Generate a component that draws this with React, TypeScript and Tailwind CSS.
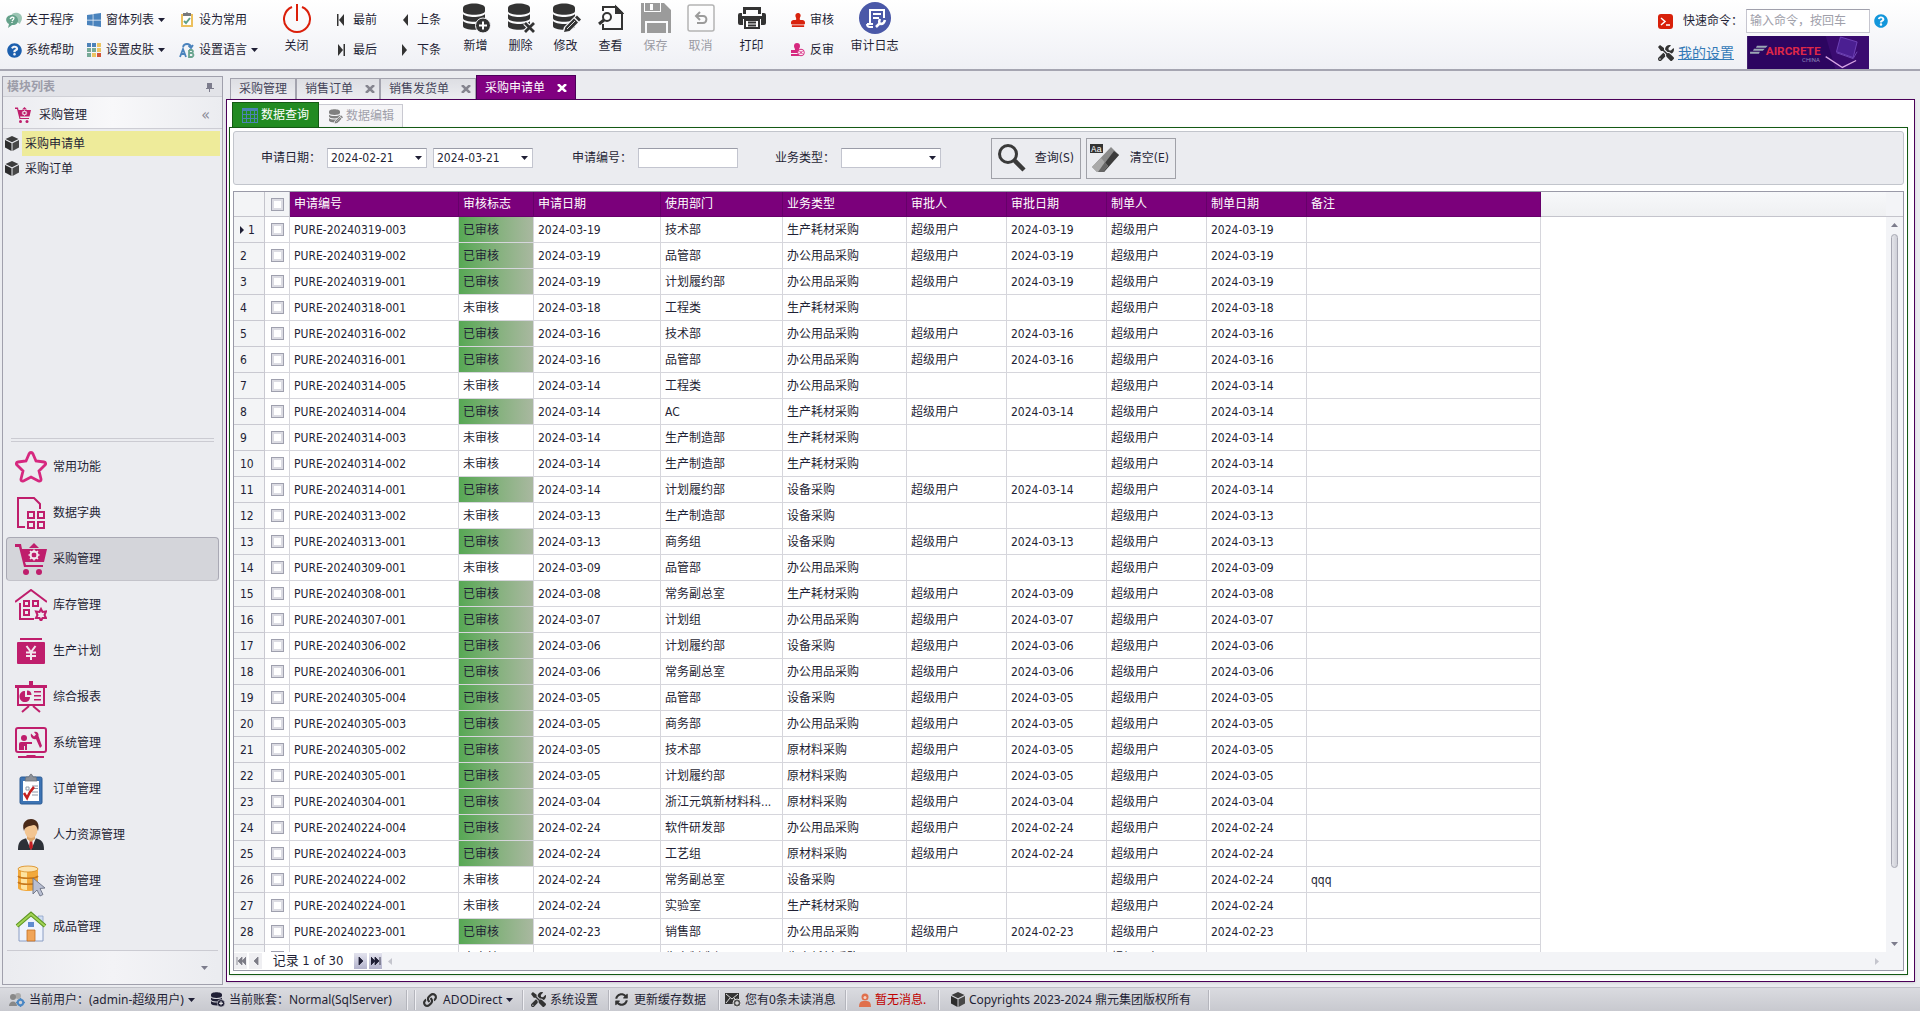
import type { ReactNode } from 'react'
import { FaDatabase, FaLink, FaQuestionCircle, FaStamp, FaSyncAlt, FaTools, FaWindows } from 'react-icons/fa'

const PINK = '#bf1e6c'

const RECORDS: string[][] = [
  ['20240319-003', '1', '2024-03-19', '技术部', '生产耗材采购', '2024-03-19'],
  ['20240319-002', '1', '2024-03-19', '品管部', '办公用品采购', '2024-03-19'],
  ['20240319-001', '1', '2024-03-19', '计划履约部', '办公用品采购', '2024-03-19'],
  ['20240318-001', '0', '2024-03-18', '工程类', '生产耗材采购', ''],
  ['20240316-002', '1', '2024-03-16', '技术部', '办公用品采购', '2024-03-16'],
  ['20240316-001', '1', '2024-03-16', '品管部', '办公用品采购', '2024-03-16'],
  ['20240314-005', '0', '2024-03-14', '工程类', '办公用品采购', ''],
  ['20240314-004', '1', '2024-03-14', 'AC', '生产耗材采购', '2024-03-14'],
  ['20240314-003', '0', '2024-03-14', '生产制造部', '生产耗材采购', ''],
  ['20240314-002', '0', '2024-03-14', '生产制造部', '生产耗材采购', ''],
  ['20240314-001', '1', '2024-03-14', '计划履约部', '设备采购', '2024-03-14'],
  ['20240313-002', '0', '2024-03-13', '生产制造部', '设备采购', ''],
  ['20240313-001', '1', '2024-03-13', '商务组', '设备采购', '2024-03-13'],
  ['20240309-001', '0', '2024-03-09', '品管部', '办公用品采购', ''],
  ['20240308-001', '1', '2024-03-08', '常务副总室', '生产耗材采购', '2024-03-09'],
  ['20240307-001', '1', '2024-03-07', '计划组', '办公用品采购', '2024-03-07'],
  ['20240306-002', '1', '2024-03-06', '计划履约部', '设备采购', '2024-03-06'],
  ['20240306-001', '1', '2024-03-06', '常务副总室', '办公用品采购', '2024-03-06'],
  ['20240305-004', '1', '2024-03-05', '品管部', '设备采购', '2024-03-05'],
  ['20240305-003', '1', '2024-03-05', '商务部', '办公用品采购', '2024-03-05'],
  ['20240305-002', '1', '2024-03-05', '技术部', '原材料采购', '2024-03-05'],
  ['20240305-001', '1', '2024-03-05', '计划履约部', '原材料采购', '2024-03-05'],
  ['20240304-001', '1', '2024-03-04', '浙江元筑新材料科...', '原材料采购', '2024-03-04'],
  ['20240224-004', '1', '2024-02-24', '软件研发部', '办公用品采购', '2024-02-24'],
  ['20240224-003', '1', '2024-02-24', '工艺组', '原材料采购', '2024-02-24'],
  ['20240224-002', '0', '2024-02-24', '常务副总室', '设备采购', '', 'qqq'],
  ['20240224-001', '0', '2024-02-24', '实验室', '生产耗材采购', ''],
  ['20240223-001', '1', '2024-02-23', '销售部', '办公用品采购', '2024-02-23'],
  ['20240222-001', '0', '2024-02-22', '生产制造部', '生产耗材采购', ''],
]

const HEADERS = ['申请编号', '审核标志', '申请日期', '使用部门', '业务类型', '审批人', '审批日期', '制单人', '制单日期', '备注']

function Caret({ className = 'text-[#1f1f35]' }: { className?: string }) {
  return (
    <svg className={`shrink-0 ${className}`} width="7" height="4" viewBox="0 0 7 4" fill="currentColor">
      <path d="M0 0h7L3.5 4z" />
    </svg>
  )
}

function Db({ size, badge }: { size: number; badge?: 'add' | 'del' | 'edit' }) {
  return (
    <svg width={size} height={size} viewBox="0 0 30 30">
      <g fill="currentColor">
        <path d="M2 5c0-6 22-6 22 0v3c0 5-22 5-22 0z" />
        <path d="M2 11c3 4 19 4 22 0v4c0 5-22 5-22 0z" />
        <path d="M2 18c3 4 19 4 22 0v5c0 5-22 5-22 0z" />
      </g>
      {badge === 'add' && (
        <g>
          <circle cx="22" cy="22.500" r="7.500" fill="currentColor" stroke="#f7f7fa" strokeWidth="1" />
          <path d="M22 18.500v8M18 22.500h8" stroke="#fff" strokeWidth="2" />
        </g>
      )}
      {badge === 'del' && (
        <g fill="none">
          <path d="M19 20l9 9M28 20l-9 9" stroke="#f7f7fa" strokeWidth="5" />
          <path d="M19 20l9 9M28 20l-9 9" stroke="currentColor" strokeWidth="2.800" />
        </g>
      )}
      {badge === 'edit' && (
        <g>
          <path d="M11 31l2-7L25 12l6 5-13 12z" fill="#f7f7fa" />
          <path d="M13 29l1.500-5L23 15.500l4 4-8.500 8.500zM24 14.500l2-2 4 4-2 2z" fill="currentColor" />
          <path d="M16 26l8-8" stroke="#ddd" strokeWidth="1" />
        </g>
      )}
    </svg>
  )
}

const Cube = () => (
  <svg className="shrink-0" width="14" height="15" viewBox="0 0 14 15">
    <path d="M7 0l6.500 3L7 6.200.5 3z" fill="#3c3c3c" />
    <path d="M0 4l6.500 3.200V15L0 11.500z" fill="#2d2d2d" />
    <path d="M14 4L7.500 7.200V15l6.500-3.500z" fill="#484848" />
  </svg>
)

const Cart = ({ size }: { size: number }) => (
  <svg width={size} height={size} viewBox="0 0 32 32" fill={PINK}>
    <path d="M0 1h6l1 5h25l-3 13H10l1 3h17v2H9L4 4H0z" />
    <path d="M14 5l5-5 5 5z" />
    <circle cx="11" cy="29" r="3" />
    <circle cx="24" cy="29" r="3" />
    <circle cx="19" cy="12" r="3.500" fill="none" stroke="#f0e8ee" strokeWidth="2" />
    <path d="M19 6.500v3M19 14.500v3M13.500 12h3M21.500 12h3M15 8l2 2M21 14l2 2M23 8l-2 2M17 14l-2 2" stroke="#f0e8ee" strokeWidth="1.500" />
  </svg>
)

const NAV: { label: string; icon: ReactNode; active?: boolean }[] = [
  {
    label: '常用功能',
    icon: <path d="M16 1.500c1 0 1.500.5 2 1.500l3 7 8 1c2 .3 2 2 1 3l-6 6 2 8c.3 2-1 2.500-2.500 2L16 26l-7.500 4C7 30.500 5.700 30 6 28l2-8-6-6c-1-1-1-2.700 1-3l8-1 3-7c.5-1 1-1.500 2-1.500z" fill="none" stroke="#d6287f" strokeWidth="2.800" />,
  },
  {
    label: '数据字典',
    icon: (
      <g fill="none" stroke={PINK} strokeWidth="2">
        <path d="M10 30H3V1h16l6 6v5" />
        <path d="M13 15h6v6h-6zM23 15h6v6h-6zM13 25h6v6h-6zM23 25h6v6h-6z" />
      </g>
    ),
  },
  { label: '采购管理', icon: <Cart size={32} />, active: true },
  {
    label: '库存管理',
    icon: (
      <g fill="none" stroke={PINK} strokeWidth="2">
        <path d="M0 13L16 1l16 12M5 14v16h14" />
        <path d="M9 12h5v5H9zM18 12h5v5h-5zM9 21h5v5H9z" />
        <path d="M26 20l1.500 3 3.500-.5-1.500 3.500 1.500 3-3.500 0-1.500 3-1.500-3-3.500 0 1.500-3-1.500-3.500 3.500.5z" />
      </g>
    ),
  },
  {
    label: '生产计划',
    icon: (
      <g fill={PINK}>
        <path d="M5 3h22v2H5zM2 8q0-1 1-1h26q1 0 1 1v20q0 1-1 1H3q-1 0-1-1z" />
        <path d="M11.500 11l4.500 6 4.500-6M11 17.500h10M11 21h10M16 17v8" fill="none" stroke="#f3e6ee" strokeWidth="2" />
      </g>
    ),
  },
  {
    label: '综合报表',
    icon: (
      <g fill={PINK}>
        <path d="M14 0h4v4h14v3H0V4h14z" />
        <path d="M3 7v17h26V7" fill="none" stroke={PINK} strokeWidth="2" />
        <path d="M10 10v6h5c0 3-2 5-5 5s-5.500-2-5.500-5.500S7 10 10 10zM12 9.500c3 0 4.500 2 4.500 4.500H12zM19 10h7v1.500h-7zM19 14h7v1.500h-7zM19 18h7v1.500h-7z" />
        <path d="M14 25l-7 6M18 25l7 6" stroke={PINK} strokeWidth="2" />
      </g>
    ),
  },
  {
    label: '系统管理',
    icon: (
      <g fill={PINK}>
        <rect x="1" y="1" width="30" height="24" rx="2" fill="none" stroke={PINK} strokeWidth="2" />
        <path d="M12 28h8l1 1h8v2H3v-2h8z" />
        <circle cx="9" cy="11" r="3" />
        <path d="M4 23v-6q0-2 2-2h11v2h-5v6h-2v-4H9v4zM16 6.500l3 3 2-2-2-2.500c3-1 5 1 4.500 4L27 19l-2 2-4-9c-3 1-6-2-5-5.500z" />
      </g>
    ),
  },
  {
    label: '订单管理',
    icon: (
      <g>
        <rect x="5" y="4" width="22" height="27" rx="1.500" fill="#3d74b4" stroke="#2b5a93" />
        <path d="M8 8h16v20H8z" fill="#fff" />
        <path d="M10 8l1-4h3q2-6 4 0h3l1 4z" fill="#8d9198" stroke="#6f737a" strokeWidth=".8" />
        <path d="M11 14h3v3h-3zM17 13h6M17 15.500h6M17 19h6M17 22h6" fill="none" stroke="#8c98a6" />
        <path d="M9 20l3 5c2-5 4-8 7-11" fill="none" stroke="#c5201f" strokeWidth="2.500" />
      </g>
    ),
  },
  {
    label: '人力资源管理',
    icon: (
      <g>
        <path d="M3 31c0-8 2-10 9-12h8c7 2 9 4 9 12z" fill="#2d3138" />
        <path d="M11 19l5 12 5-12z" fill="#f4f4f4" />
        <path d="M15 20h2l1 8-2 3-2-3z" fill="#c11d22" />
        <path d="M12 15h8v5l-4 3-4-3z" fill="#dfa66b" />
        <ellipse cx="16" cy="11" rx="6.500" ry="8" fill="#f3c591" />
        <path d="M9 12C6 3 12 0 16 0c6 0 9 5 7 12-1-4-2-6-4-6-4 1-9 1-10 6z" fill="#4a2a18" />
      </g>
    ),
  },
  {
    label: '查询管理',
    icon: (
      <g>
        <path d="M3 4c0-4 20-4 20 0v19c0 4-20 4-20 0z" fill="#f2a93c" />
        <path d="M6 5h6v20c-3 0-6-1-6-2z" fill="#fde3a0" />
        <ellipse cx="13" cy="4" rx="10" ry="3" fill="#fbe3b0" stroke="#d98e25" strokeWidth=".8" />
        <path d="M3 11c2 3 18 3 20 0M3 17c2 3 18 3 20 0" fill="none" stroke="#c7771a" strokeWidth="1.500" />
        <path d="M18 13v16l4-4 3 6 3-1.500-3-6 5-.5z" fill="#b9bfd2" stroke="#6c7384" strokeWidth=".9" />
      </g>
    ),
  },
  {
    label: '成品管理',
    icon: (
      <g>
        <path d="M23 5h5v10h-5z" fill="#cfdcf2" stroke="#8ea3c8" strokeWidth=".8" />
        <path d="M4 14L16 4l12 10v16H4z" fill="#eef3fd" stroke="#7f95bd" strokeWidth=".9" />
        <path d="M2 15L16 3l14 12" fill="none" stroke="#5c9422" strokeWidth="4" />
        <path d="M2 15L16 3l14 12" fill="none" stroke="#a2d355" strokeWidth="2" />
        <path d="M13 11h6v5h-6z" fill="#5f8bd0" />
        <path d="M12 19h8v11h-8z" fill="#f0a55a" stroke="#c26f23" strokeWidth=".8" />
      </g>
    ),
  },
]

function SmallItem({ icon, label, caret }: { icon: ReactNode; label: string; caret?: boolean }) {
  return (
    <button type="button" className="flex h-[30px] items-center gap-1 whitespace-nowrap">
      <span className="flex w-4 shrink-0 justify-center">{icon}</span>
      {label}
      {caret && <Caret />}
    </button>
  )
}

function BigItem({ icon, label, disabled }: { icon: ReactNode; label: string; disabled?: boolean }) {
  return (
    <button type="button" disabled={disabled} className={`flex w-[45px] flex-col items-center whitespace-nowrap ${disabled ? 'text-[#9b9ba3]' : ''}`}>
      <span className={`flex h-8 items-center ${disabled ? 'text-[#9b9b9b]' : 'text-[#333]'}`}>{icon}</span>
      <span className="mt-1 leading-4">{label}</span>
    </button>
  )
}

function Arrow({ dir, bar }: { dir: 'left' | 'right'; bar?: boolean }) {
  return (
    <svg width="8" height="12" viewBox="0 0 8 12" fill="#333" className={dir === 'right' ? 'rotate-180' : ''}>
      {bar && <path d="M0 0h1.500v12H0z" />}
      <path d="M7 0v12L2 6z" />
    </svg>
  )
}

function Ribbon() {
  return (
    <header className="flex h-[71px] shrink-0 border-b-2 border-[#a5a5b1] bg-linear-to-b from-white to-[#eff0f5]">
      <div className="ml-1.5 flex pt-[5px]">
        <div className="mr-3">
          <SmallItem
            label="关于程序"
            icon={
              <svg width="16" height="16" viewBox="0 0 16 16">
                <path d="M5 4c1-5 11-4 11 2 0 3-2 4-2 6l-3-2z" fill="#9cc5b4" />
                <path d="M6 3c8 0 8 11 0 10l-4 3 1-4C-2 9 0 3 6 3z" fill="#64a18a" />
                <path d="M4 7q2-3 4-1 0 1-2 3M6 10v1" fill="none" stroke="#fff" strokeWidth="1.300" />
              </svg>
            }
          />
          <SmallItem label="系统帮助" icon={<FaQuestionCircle size={15} color="#1c5fae" />} />
        </div>
        <div className="mr-[14px]">
          <SmallItem label="窗体列表" icon={<FaWindows size={16} color="#4a83bd" />} caret />
          <SmallItem
            label="设置皮肤"
            caret
            icon={
              <svg width="15" height="15" viewBox="0 0 15 15">
                <path d="M0 0h4v4H0zM5 0h4v4H5z" fill="#4d82b8" />
                <path d="M10 0h4v4h-4zM10 5h4v4h-4z" fill="#ecc462" />
                <path d="M0 5h4v4H0zM5 5h4v4H5zM0 10h4v4H0z" fill="#77aa98" />
                <path d="M5 10h4v4H5z" fill="#ecc462" />
                <path d="M10 10h4v4h-4z" fill="#d2553a" />
              </svg>
            }
          />
        </div>
        <div>
          <SmallItem
            label="设为常用"
            icon={
              <svg width="14" height="16" viewBox="0 0 14 16">
                <path d="M2 3h10v11H2z" fill="#fff" stroke="#ecc05e" strokeWidth="2" />
                <path d="M3 4V1h3q1-2 2 0h3v3z" fill="#76787c" />
                <path d="M4 9l2 2 4-5" fill="none" stroke="#5f9f88" strokeWidth="2" />
              </svg>
            }
          />
          <SmallItem
            label="设置语言"
            caret
            icon={
              <svg width="16" height="15" viewBox="0 0 16 15" fill="none" strokeWidth="1.800">
                <path d="M1 14L4 6l3 8M2 11h4M4 4C5 0 11 0 12 4M9.500 2.500L12 5l2-3" stroke="#4a83bd" />
                <path d="M10 7h3q2 1 0 3h-3V7v7h3q3-2 0-4" stroke="#6aa58f" />
              </svg>
            }
          />
        </div>
      </div>
      <div className="ml-4 pt-[2px]">
        <BigItem
          label="关闭"
          icon={
            <svg width="30" height="30" viewBox="0 0 30 30" fill="none" stroke="#db1f0a" strokeWidth="2">
              <path d="M10 4a13 13 0 1 0 10 0M15 1v17" />
            </svg>
          }
        />
      </div>
      <div className="ml-3.5 flex gap-5 pt-[5px]">
        <div>
          <SmallItem label="最前" icon={<Arrow dir="left" bar />} />
          <SmallItem label="最后" icon={<Arrow dir="right" bar />} />
        </div>
        <div>
          <SmallItem label="上条" icon={<Arrow dir="left" />} />
          <SmallItem label="下条" icon={<Arrow dir="right" />} />
        </div>
      </div>
      <div className="ml-3 flex pt-[2px]">
        <BigItem label="新增" icon={<Db size={30} badge="add" />} />
        <BigItem label="删除" icon={<Db size={30} badge="del" />} />
        <BigItem label="修改" icon={<Db size={30} badge="edit" />} />
        <BigItem
          label="查看"
          icon={
            <svg width="26" height="28" viewBox="0 0 26 28" fill="none" stroke="currentColor" strokeWidth="2">
              <path d="M5 7V3h13l6 6v16H5v-5" />
              <path d="M18 3v6h6z" fill="currentColor" />
              <circle cx="9" cy="13" r="4" fill="#fff" />
              <path d="M6 16l-5 4" strokeWidth="3" />
            </svg>
          }
        />
        <BigItem
          label="保存"
          disabled
          icon={
            <svg width="30" height="30" viewBox="0 0 30 30" fill="currentColor">
              <path d="M0 0h3v9h17V0h3l7 7v23h-3V18H4v12H0z" />
              <path d="M4 0h15v8H4zm5 1v6h3V1z" fillRule="evenodd" />
              <path d="M6 20h19v10H6z" />
            </svg>
          }
        />
        <BigItem
          label="取消"
          disabled
          icon={
            <svg width="28" height="28" viewBox="0 0 28 28" fill="none" stroke="currentColor">
              <rect x="1" y="1" width="26" height="26" rx="2" stroke="#b4b4b4" strokeWidth="1.500" />
              <path d="M9 12h7c5 0 4 7 0 7h-6M13 8l-4 4 4 4" strokeWidth="2" />
            </svg>
          }
        />
        <div className="ml-1.5">
          <BigItem
            label="打印"
            icon={
              <svg width="28" height="24" viewBox="0 0 28 24" fill="currentColor">
                <path d="M5 1h18v7h-3V4H8v4H5zM0 9q0-2 2-2h2v3h20V7h2q2 0 2 2v8q0 2-2 2h-3v-6H5v6H2q-2 0-2-2z" />
                <path d="M7 14h14v8H7zM10 16.500h8M10 19.500h8" fill="#fff" stroke="currentColor" strokeWidth="2" />
              </svg>
            }
          />
        </div>
      </div>
      <div className="ml-4 pt-[5px]">
        <SmallItem label="审核" icon={<FaStamp size={14} color="#d8220d" />} />
        <SmallItem
          label="反审"
          icon={
            <svg width="14" height="14" viewBox="0 0 14 14">
              <path d="M3 3a3 3 0 0 1 6 0c0 2-1 2-1 4h4v3H0V7h4c0-2-1-2-1-4zM0 11h9v2H0z" fill="#d6287f" />
              <circle cx="10" cy="9.500" r="3.300" fill="#fbeaf3" stroke="#d6287f" />
              <path d="M8.500 8l3 3M11.500 8l-3 3" stroke="#d6287f" />
            </svg>
          }
        />
      </div>
      <div className="ml-[18px] pt-[2px]">
        <BigItem
          label="审计日志"
          icon={
            <svg width="32" height="32" viewBox="0 0 32 32">
              <circle cx="16" cy="16" r="16" fill="#4a58a8" />
              <path d="M14 25h-3q-3 0-3-3M11 22V8h14v8M8 22h6M14 12h8M14 16h6" fill="none" stroke="#fff" strokeWidth="2" />
              <path d="M17 25l4-4M21 17q-2 4 1 5 3 0 4-4" fill="none" stroke="#fff" strokeWidth="2.500" />
            </svg>
          }
        />
      </div>
      <div className="mr-8 ml-auto flex gap-[3px]">
        <div className="pt-1.5">
          <label htmlFor="command" className="flex h-[30px] items-center gap-2.5">
            <svg width="15" height="15" viewBox="0 0 15 15">
              <rect width="15" height="15" rx="3" fill="#d8200a" />
              <path d="M3 4l4 3.500L3 11M8 11h4" fill="none" stroke="#fff" strokeWidth="1.500" />
            </svg>
            快速命令：
          </label>
          <a href="#settings" className="flex h-[34px] items-center gap-1 text-[14px] text-[#337ab7] underline">
            <FaTools size={16} color="#333" />
            我的设置
          </a>
        </div>
        <div className="flex w-[124px] flex-col pt-[9px]">
          <input
            id="command"
            placeholder="输入命令，按回车"
            className="h-6 w-full border border-[#c6c6d0] border-t-[#a0a0ac] bg-white px-[3px] text-[12px] outline-none placeholder:text-[#a0a0aa]"
          />
          <svg className="mt-[3px]" width="124" height="34" viewBox="0 0 124 34">
            <rect width="124" height="34" fill="#2c0560" />
            <path d="M80 0h44v34H90z" fill="#3a0b70" />
            <path d="M95 1l17 5-4 16-17-6z" fill="#4b1f92" stroke="#7b4ec4" strokeWidth=".8" />
            <path d="M91 17l17 6 4-7" fill="none" stroke="#6e46b4" />
            <path d="M80 21l17 11 14-7" fill="none" stroke="#d9a6e6" strokeWidth="1.300" />
            <path d="M10 10h11l-2 2H9zM7 13h11l-2 2H6zM3 16h10l-1 2H3z" fill="#9aa7b4" />
            <text x="19" y="19" fill="#dc2848" fontFamily="Roboto, sans-serif" fontSize="12" fontWeight="700">AIRCRETE</text>
            <text x="56" y="26" fill="#8f86b8" fontFamily="Roboto, sans-serif" fontSize="6">CHINA</text>
          </svg>
        </div>
        <button type="button" aria-label="帮助" className="ml-px h-[42px] self-start">
          <FaQuestionCircle size={14} color="#1296db" />
        </button>
      </div>
    </header>
  )
}

function Sidebar() {
  return (
    <aside className="flex w-[221px] shrink-0 flex-col border border-[#a0a0ac] bg-[#ebecf0]">
      <div className="flex h-5 shrink-0 items-center justify-between border-b border-[#cfd0d6] bg-[#e2e3e8] pt-px pr-2 pl-1 font-bold text-[#9c9ca8]">
        模块列表
        <svg width="8" height="9" viewBox="0 0 8 9" fill="#7c7c8c">
          <path d="M1 0h5v5h2v1H4v3H3V6H0V5h1z" />
        </svg>
      </div>
      <div className="flex h-8 shrink-0 items-center border-b border-[#cdcdd4] bg-linear-to-r from-[#ebecf0] via-[#f8f8fa] to-[#ebecf0] px-3 pt-1">
        <Cart size={16} />
        <span className="ml-2 grow">采购管理</span>
        <span className="text-[16px] text-[#8c8c98]">«</span>
      </div>
      <ul className="mr-0.5 pt-0.5">
        {['采购申请单', '采购订单'].map((name, i) => (
          <li key={name} className="flex h-[25px] items-center gap-[3px] pl-[2px]">
            <Cube />
            <button type="button" className={`h-full grow pl-[3px] text-left ${i === 0 ? 'bg-[#eeeb9a]' : ''}`}>{name}</button>
          </li>
        ))}
      </ul>
      <nav className="mt-auto flex flex-col">
        <div className="mx-2 mb-0.5 h-1 border-y border-[#cbcbd2]" />
        {NAV.map(({ label, icon, active }) => (
          <button
            key={label}
            type="button"
            className={`mx-[3px] my-px flex h-11 items-center gap-1.5 rounded-sm border pl-2 text-left ${
              active ? 'border-[#a9a9b4] border-b-[#c3c3ca] bg-[#d4d5da]' : 'border-transparent'
            }`}
          >
            <svg width="32" height="32" viewBox="0 0 32 32">{icon}</svg>
            {label}
          </button>
        ))}
      </nav>
      <div className="mx-1 flex h-[34px] shrink-0 items-center justify-end border-t border-[#cbcbd2] bg-linear-to-r from-[#ebecf0] via-[#f3f3f6] to-[#ebecf0] pr-2.5">
        <Caret className="text-[#7c7c8c]" />
      </div>
    </aside>
  )
}

function Tab({ label, closable, active }: { label: string; closable?: boolean; active?: boolean }) {
  return (
    <button
      type="button"
      role="tab"
      aria-selected={!!active}
      className={`flex items-center gap-2 border border-b-0 px-2 ${
        active ? 'h-6 border-[#4b0058] bg-[#800080] text-white' : 'h-[21px] border-[#a3a3ae] bg-linear-to-b from-[#dddee3] to-[#ecedf1] pr-1 text-[#45455a]'
      }`}
    >
      <span className="pr-1">{label}</span>
      {closable && (
        <svg width="10" height="8" viewBox="0 0 10 8" fill="none" stroke={active ? '#fff' : '#85858f'} strokeWidth="2.500">
          <path d="M1 0l8 8M9 0L1 8" />
        </svg>
      )}
    </button>
  )
}

const FIELD = 'flex h-5 w-[100px] items-center border border-[#c3c5cf] border-t-[#9a9ca8] bg-white pr-1'

function Filters() {
  return (
    <form className="flex h-[54px] shrink-0 items-center rounded-[3px] border border-[#c2c5cc] bg-[#ebecf0] pl-[27px] whitespace-nowrap">
      <label htmlFor="from" className="w-[66px]">申请日期：</label>
      <span className={FIELD}>
        <input id="from" defaultValue="2024-02-21" className="w-full min-w-0 pl-[3px] outline-none" />
        <Caret />
      </span>
      <span className={`ml-1.5 ${FIELD}`}>
        <input aria-label="截止日期" defaultValue="2024-03-21" className="w-full min-w-0 pl-[3px] outline-none" />
        <Caret />
      </span>
      <label htmlFor="code" className="ml-[39px] w-[66px]">申请编号：</label>
      <input id="code" className={`outline-none ${FIELD}`} />
      <label htmlFor="kind" className="ml-[37px] w-[66px]">业务类型：</label>
      <span className={FIELD}>
        <select id="kind" defaultValue="" className="w-full appearance-none outline-none">
          <option value="" />
          <option>办公用品采购</option>
        </select>
        <Caret />
      </span>
      <button type="button" className="ml-[50px] flex h-[41px] w-[90px] items-center justify-between border border-[#a0a1a8] pr-1.5 pl-1.5">
        <svg width="28" height="28" viewBox="0 0 28 28" fill="none" stroke="#3a3a3a">
          <circle cx="10" cy="10" r="8.500" strokeWidth="3" />
          <path d="M16 16l10 10" strokeWidth="4.500" />
        </svg>
        查询(S)
      </button>
      <button type="button" className="ml-[5px] flex h-[41px] w-[90px] items-center justify-between border border-[#a0a1a8] pr-1.5 pl-[3px]">
        <svg width="30" height="30" viewBox="0 0 30 30">
          <path d="M21 4l8 8-15 17H7l-5-5z" fill="#8b8b8b" />
          <path d="M29 12L14 29H8L24 8z" fill="#3c3c3c" />
          <path d="M11 15l7 8-5 6H7l-5-5z" fill="#a9a9a9" />
          <path d="M15 19l3 4-5 6H8z" fill="#666" />
          <path d="M0 1h13v9H0z" fill="#333" />
          <text x="1" y="9" fill="#fff" fontFamily="Liberation Mono, monospace" fontSize="9">Aa</text>
        </svg>
        清空(E)
      </button>
    </form>
  )
}

const Box = ({ label }: { label: string }) => (
  <input
    type="checkbox"
    aria-label={label}
    className="mx-auto block size-[13px] appearance-none border border-[#9fa0ae] bg-white shadow-[inset_0_0_0_2px_#dcdce3]"
  />
)

const CELL = 'truncate border-r border-b border-[#d6d6dc] px-1'

function Grid() {
  return (
    <div className="flex min-h-0 grow flex-col border border-[#9a9aa8]">
      <div className="flex min-h-0 grow">
        <div className="h-0 min-h-full grow overflow-hidden">
          <table className="w-full table-fixed border-separate border-spacing-0 text-left">
            <colgroup>
              <col className="w-[31px]" />
              <col className="w-[25px]" />
              <col className="w-[169px]" />
              <col className="w-[75px]" />
              <col className="w-[127px]" />
              <col className="w-[122px]" />
              <col className="w-[124px]" />
              <col className="w-[100px]" />
              <col className="w-[100px]" />
              <col className="w-[100px]" />
              <col className="w-[100px]" />
              <col className="w-[234px]" />
              <col />
            </colgroup>
            <thead>
              <tr className="h-[25px]">
                <th className="border-r border-b border-[#c4c4cc] bg-[#f3f4f6]" />
                <th className="border-r border-b border-[#c4c4cc] bg-[#f3f4f6]"><Box label="全选" /></th>
                {HEADERS.map((h) => (
                  <th key={h} className="border-r border-b border-[#66006a] bg-[#7b007b] px-1 font-normal text-white">{h}</th>
                ))}
                <th className="border-b border-[#c4c4cc] bg-linear-to-b from-[#f7f8fa] to-[#eff0f2]" />
              </tr>
            </thead>
            <tbody>
              {RECORDS.map(([code, ok, date, dept, kind, approved, note], i) => (
                <tr key={code} className="h-[26px]">
                  <td className="border-r border-b border-[#c9c9d1] bg-[#f3f4f6]">
                    <span className="flex items-center gap-1 pl-1.5">
                      {i === 0 && (
                        <svg width="4" height="8" viewBox="0 0 4 8"><path d="M0 0v8l4-4z" fill="#1f1f35" /></svg>
                      )}
                      {i + 1}
                    </span>
                  </td>
                  <td className="border-r border-b border-[#d6d6dc]"><Box label={code} /></td>
                  <td className={CELL}>PURE-{code}</td>
                  <td className={`${CELL} ${ok === '1' ? 'bg-linear-to-r from-[#56a854] to-[#a9b8a0]' : ''}`}>{ok === '1' ? '已审核' : '未审核'}</td>
                  <td className={CELL}>{date}</td>
                  <td className={CELL}>{dept}</td>
                  <td className={CELL}>{kind}</td>
                  <td className={CELL}>{approved && '超级用户'}</td>
                  <td className={CELL}>{approved}</td>
                  <td className={CELL}>超级用户</td>
                  <td className={CELL}>{date}</td>
                  <td className={CELL}>{note}</td>
                  <td />
                </tr>
              ))}
            </tbody>
          </table>
        </div>
        <div className="flex w-[17px] shrink-0 flex-col items-center bg-[#f3f4f7]">
          <div className="h-[25px] w-full border-b border-[#c4c4cc]" />
          <Caret className="mt-1.5 rotate-180 text-[#7c7c8c]" />
          <div className="mt-[7px] mb-[74px] w-[7px] grow rounded-full border border-[#a6a7b2] bg-linear-to-r from-[#e4e5ea] to-[#cfd0d8]" />
          <Caret className="mb-1.5 text-[#7c7c8c]" />
        </div>
      </div>
      <div className="flex h-[18px] shrink-0 items-center bg-[#f3f4f7]">
        <div className="flex h-full items-center gap-0.5 bg-white">
          <Pager path="M1 1v8M6 1v8L2 5zM10 1v8L6 5z" muted label="首页" />
          <Pager path="M7 1v8L3 5z" muted label="上一条" />
          <span className="w-[88px] text-center text-[13px] whitespace-nowrap">记录 1 of 30</span>
          <Pager path="M3 1v8l4-4z" label="下一条" />
          <Pager path="M0 1v8l4-4zM4 1v8l4-4zM9 1v8" label="末页" />
        </div>
        <svg className="ml-1.5" width="4" height="7" viewBox="0 0 4 7" fill="#c4c5cd"><path d="M4 0v7L0 3.500z" /></svg>
        <svg className="mr-6 ml-auto" width="4" height="7" viewBox="0 0 4 7" fill="#c4c5cd"><path d="M0 0v7l4-3.500z" /></svg>
      </div>
    </div>
  )
}

function Pager({ path, muted, label }: { path: string; muted?: boolean; label: string }) {
  return (
    <button
      type="button"
      aria-label={label}
      className={`flex h-4 w-[13px] items-center justify-center ${muted ? 'bg-[#efeff2] text-[#7c7c86]' : 'bg-linear-to-b from-[#e3e3ee] to-[#b3b3cc] text-[#1f1f35]'}`}
    >
      <svg width="10" height="10" viewBox="0 0 10 10" fill="currentColor" stroke="currentColor" strokeWidth=".8"><path d={path} /></svg>
    </button>
  )
}

function StatusBar() {
  const sep = 'h-5 w-px shrink-0 bg-[#b4b5bc] shadow-[1px_0_0_#f0f0f4]'
  return (
    <footer className="flex h-6 shrink-0 items-center border-t border-[#bfc0c7] bg-linear-to-b from-[#dadbe0] to-[#c8c9cf] pl-[9px] font-['Noto_Sans','Noto_Sans_CJK_SC',sans-serif] whitespace-nowrap">
      <span className="flex w-[201px] items-center gap-1">
        <svg width="16" height="15" viewBox="0 0 16 15">
          <circle cx="9" cy="4" r="3" fill="#aaa" />
          <circle cx="4" cy="5" r="3" fill="#888" />
          <path d="M0 14c0-6 8-6 8 0z" fill="#888" />
          <circle cx="11.500" cy="10.500" r="2.700" fill="none" stroke="#4a87c4" strokeWidth="2" />
          <path d="M11.500 6v2M11.500 13v2M7 10.500h2M14 10.500h2" stroke="#4a87c4" strokeWidth="1.500" />
        </svg>
        当前用户：(admin-超级用户)
        <Caret />
      </span>
      <span className="flex w-[196px] items-center gap-1 text-[#1f1f35]">
        <Db size={15} badge="add" />
        当前账套：Normal(SqlServer)
      </span>
      <i className={sep} />
      <i className={`ml-[7px] ${sep}`} />
      <span className="flex w-[107px] items-center gap-1 pl-2">
        <FaLink size={14} color="#333" />
        <span className="ml-0.5">ADODirect</span>
        <Caret />
      </span>
      <i className={sep} />
      <span className="flex w-[85px] items-center gap-1 pl-2">
        <FaTools size={15} color="#333" />
        系统设置
      </span>
      <i className={sep} />
      <span className="flex w-[109px] items-center gap-1.5 pl-1.5">
        <FaSyncAlt size={13} color="#333" />
        更新缓存数据
      </span>
      <i className={sep} />
      <span className="flex w-[126px] items-center gap-1 pl-1.5">
        <svg width="16" height="14" viewBox="0 0 16 14">
          <path d="M0 0h14v11H0z" fill="#333" />
          <path d="M1 1l6 5 6-5M1 10l4-5M13 10L9 5" fill="none" stroke="#ddd" />
          <circle cx="12" cy="10" r="4" fill="#555" stroke="#ddd" />
          <path d="M12 8v4M10 10h4" stroke="#fff" />
        </svg>
        您有0条未读消息
      </span>
      <i className={sep} />
      <span className="flex w-[92px] items-center gap-1 pl-[13px] text-[#c00000]">
        <svg width="12" height="14" viewBox="0 0 12 14" fill="#e0704c">
          <circle cx="6" cy="4" r="3.500" />
          <path d="M0 14q0-6 4-6h4q4 0 4 6z" />
          <circle cx="6" cy="4.500" r="1.500" fill="#f4d3c6" />
        </svg>
        暂无消息.
      </span>
      <i className={sep} />
      <span className="flex w-[269px] items-center gap-1 pl-3">
        <Cube />
        Copyrights 2023-2024 鼎元集团版权所有
      </span>
      <i className={sep} />
    </footer>
  )
}

export default function App() {
  return (
    <div className="flex h-screen flex-col overflow-hidden bg-[#ebecf0] font-['DejaVu_Sans_Condensed','Noto_Sans','Noto_Sans_CJK_SC',sans-serif] text-[12px] leading-4 text-[#1f1f35]">
      <Ribbon />
      <div className="flex min-h-0 grow gap-[3px] pr-[5px] pb-0.5 pl-0.5">
        <div className="flex pt-[5px]">
          <Sidebar />
        </div>
        <main className="flex min-w-0 grow flex-col pt-1 pb-[3px]">
          <div role="tablist" className="flex shrink-0 items-end pl-1">
            <Tab label="采购管理" />
            <Tab label="销售订单" closable />
            <Tab label="销售发货单" closable />
            <Tab label="采购申请单" closable active />
          </div>
          <div className="flex min-h-0 grow flex-col border border-[#4b0058] bg-white px-0.5 pt-0.5 pb-1.5 pr-1.5 shadow-sm">
            <div role="tablist" className="flex shrink-0 items-end pl-[3px]">
              <button type="button" role="tab" aria-selected className="flex h-[25px] w-[87px] items-center gap-[3px] border border-b-0 border-[#145a14] bg-[#228b22] pl-[9px] text-white">
                <svg width="16" height="15" viewBox="0 0 16 15" stroke="#4b84b4" fill="none">
                  <path d="M0 1.500h16" strokeWidth="3" />
                  <path d="M.5 0v15M4.500 0v15M8.500 0v15M12.500 0v15M15.500 0v15M0 6.500h16M0 10.500h16M0 14.500h16" />
                </svg>
                数据查询
              </button>
              <button type="button" role="tab" aria-selected={false} className="flex h-[23px] w-[84px] items-center gap-[3px] border border-b-0 border-l-0 border-[#c9c9d1] bg-[#f5f5f7] pl-[9px] text-[#a0a0aa]">
                <span className="text-[#808080]"><Db size={15} badge="edit" /></span>
                数据编辑
              </button>
            </div>
            <div className="flex min-h-0 grow flex-col gap-1.5 border border-[#145a14] p-[3px] shadow-sm">
              <Filters />
              <Grid />
            </div>
          </div>
        </main>
      </div>
      <StatusBar />
    </div>
  )
}
